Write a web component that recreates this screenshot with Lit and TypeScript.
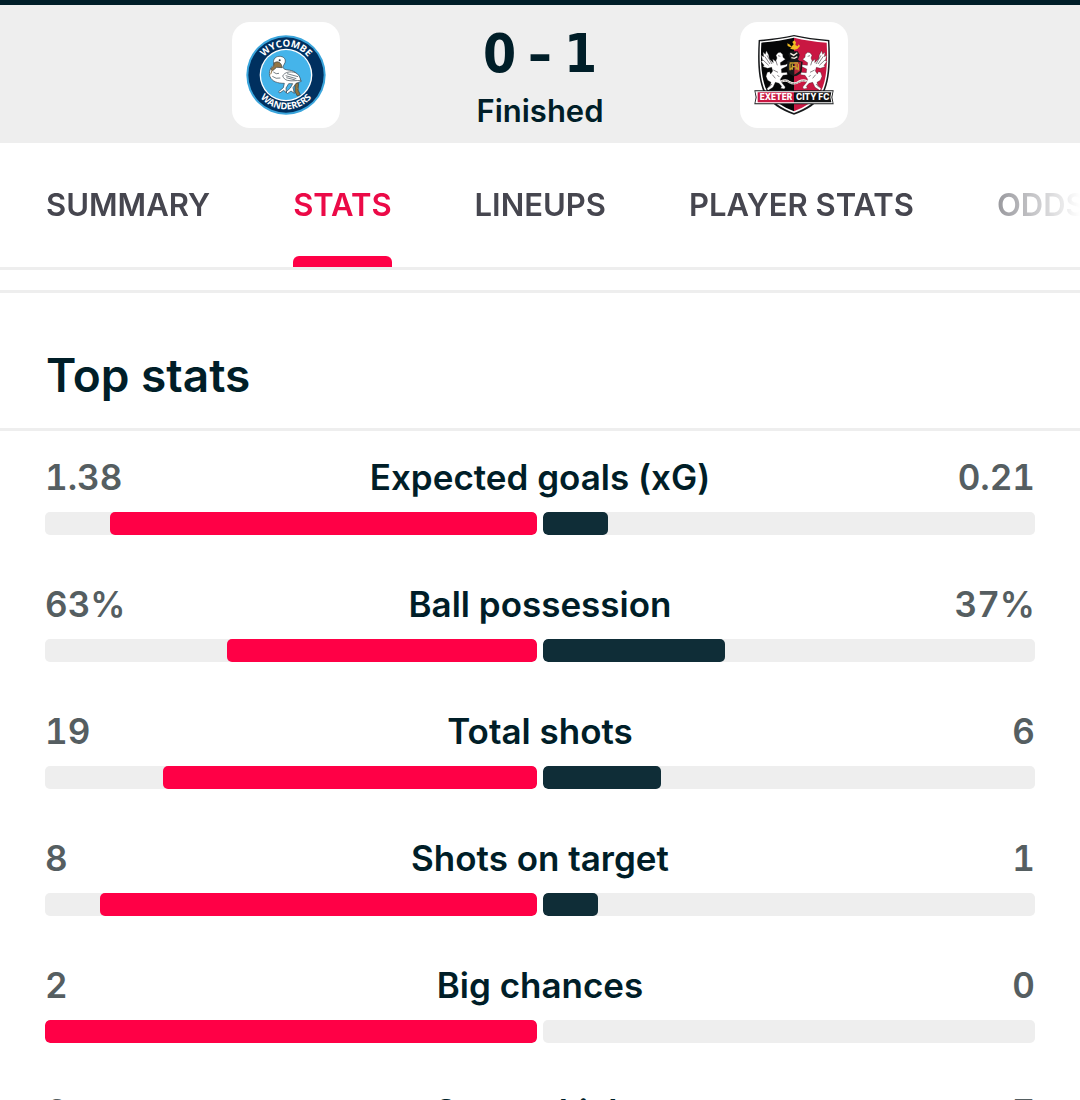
import { LitElement, html, svg, css } from "lit";
import { customElement, property } from "lit/decorators.js";

interface Stat {
  label: string;
  home: string;
  away: string;
  homeShare: number;
  awayShare: number;
}

const STATS: Stat[] = [
  { label: "Expected goals (xG)", home: "1.38", away: "0.21", homeShare: 86.8, awayShare: 13.2 },
  { label: "Ball possession", home: "63%", away: "37%", homeShare: 63, awayShare: 37 },
  { label: "Total shots", home: "19", away: "6", homeShare: 76, awayShare: 24 },
  { label: "Shots on target", home: "8", away: "1", homeShare: 88.8, awayShare: 11.2 },
  { label: "Big chances", home: "2", away: "0", homeShare: 100, awayShare: 0 },
  { label: "Corner kicks", home: "6", away: "7", homeShare: 46.2, awayShare: 53.8 },
];

const TABS = ["Summary", "Stats", "Lineups", "Player stats", "Odds"];

@customElement("wycombe-crest")
class WycombeCrest extends LitElement {
  static styles = css`
    :host { display: block; }
    svg { display: block; width: 100%; }
    text { font-family: "Open Sans", "Noto Sans", sans-serif; font-weight: 700; fill: #fff; }
  `;
  render() {
    return html`<svg viewBox="0 0 240 240" role="img" aria-label="Wycombe Wanderers">
      <defs>
        <path id="upper" d="M35 120 A85 85 0 0 1 205 120" />
        <path id="lower" d="M17 120 A103 103 0 0 0 223 120" />
      </defs>
      <circle cx="120" cy="120" r="119" fill="#3aa5dc" />
      <circle cx="120" cy="120" r="113" fill="#00305f" />
      <circle cx="120" cy="120" r="79" fill="#fff" />
      <circle cx="120" cy="120" r="75" fill="#45b4ea" />
      <text font-size="29" text-anchor="middle"><textPath href="#upper" startOffset="50%">WYCOMBE</textPath></text>
      <text font-size="28" text-anchor="middle"><textPath href="#lower" startOffset="50%">WANDERERS</textPath></text>
      ${svg`
      <g stroke="#34414a" stroke-width="2" stroke-linejoin="round">
        <path fill="#8d7440" d="M147 142 L158 145 L156 165 L163 179 L154 183 L147 170 Z" />
        <path fill="#fff" d="M115 87 C123 75 114 63 99 64 C86 65 79 76 84 89 C73 97 67 112 72 125 C78 140 96 145 115 145 L112 158 L98 170 L101 174 L113 166 L121 173 L120 159 L128 146 L140 146 L133 159 L120 171 L124 176 L135 168 L145 175 L141 158 L150 145 L166 139 L161 130 C155 114 143 106 125 105 C111 103 108 98 115 87 Z" />
        <path fill="#947545" d="M84 84 C93 78 101 80 106 89 L109 98 L92 97 L80 107 L74 102 L83 93 Z" />
        <path fill="#fff" d="M110 123 C116 111 133 108 148 113 C158 117 163 127 164 137 C151 135 140 140 124 136 C117 134 113 130 110 123 Z" />
        <path fill="none" d="M119 122 L151 131 M123 116 L156 125 M121 128 L148 135 M82 111 Q91 119 99 115 M79 124 Q90 133 103 129" />
      </g>
      <path fill="none" stroke="#947545" stroke-width="3" d="M93 91 L101 92 M79 103 L74 118 M150 157 L159 164" />
      <circle cx="101" cy="76" r="3" fill="#26343d" />`}
    </svg>`;
  }
}

@customElement("exeter-crest")
class ExeterCrest extends LitElement {
  static styles = css`
    :host { display: block; }
    svg { display: block; width: 100%; }
    text { font-family: Inter, "Liberation Sans", sans-serif; font-weight: 800; fill: #fff; }
  `;
  render() {
    const griffin = svg`
      <path fill="#fff" stroke="#222" stroke-width="1" d="M94 73 L87 67 L86 58 L79 52 L72 53 L66 61 L69 69 L65 79 L56 72 L58 83 L46 72 L44 60 L37 47 L34 58 L27 51 L29 65 L22 61 L26 77 L21 79 L30 91 L27 95 L41 100 L53 97 L56 108 L50 117 L47 110 L40 112 L36 124 L41 136 L51 142 L49 150 L38 162 L43 166 L57 157 L64 142 L75 145 L83 154 L80 160 L91 162 L94 156 L84 144 L79 133 L87 121 L100 119 L99 112 L83 113 L82 102 L99 94 L104 84 L94 89 L80 91 L79 83 Z" />
      <path fill="none" stroke="#4c454b" stroke-width="2" d="M32 64 L48 87 M39 61 L54 87 M27 75 L44 91 M66 78 L70 91 M58 105 L72 112 M55 119 L64 130 M72 62 L79 64 M70 120 L76 126 M45 157 L54 147" />`;
    return html`<svg viewBox="0 0 240 240" role="img" aria-label="Exeter City FC">
      <path fill="#17191b" d="M120 0 C90 7 55 12 14 15 C10 79 12 137 31 175 C48 205 82 227 120 239 C158 227 192 205 209 175 C228 137 230 79 226 15 C185 12 150 7 120 0 Z" />
      <path fill="#fff" d="M120 4 C91 11 56 16 18 19 C15 79 17 135 35 172 C52 200 85 222 120 234 C155 222 188 200 205 172 C223 135 225 79 222 19 C184 16 149 11 120 4 Z" />
      <path fill="#050607" d="M120 8 C91 15 57 20 22 23 C19 79 21 132 39 169 C56 196 87 217 120 229 Z" />
      <path fill="#c91742" d="M120 8 C149 15 183 20 218 23 C221 79 219 132 201 169 C184 196 153 217 120 229 Z" />
      ${griffin}
      <g transform="translate(240 0) scale(-1 1)">${griffin}</g>
      <path fill="#17191b" d="M103 57 L110 49 L131 49 L137 59 L132 74 L138 79 L146 80 L143 110 Q137 120 121 124 Q106 119 101 108 L99 79 L110 75 Z" />
      <path fill="#b5243b" d="M121 81 L141 82 L138 108 L121 119 Z" />
      <path fill="#f1bd23" d="M100 25 L108 29 L112 35 L119 28 L115 21 L121 16 L126 22 L124 30 L131 34 L134 28 L138 33 L130 42 L121 44 L108 41 L113 38 L101 33 Z" />
      <path fill="none" stroke="#f5ede1" stroke-width="4" d="M109 55 L119 61 L130 53 M112 68 L121 70 L130 65" />
      <path fill="none" stroke="#c9a32f" stroke-width="4" d="M107 84 L132 84 M108 86 L108 106 M115 88 L115 104 M126 87 L126 104 M133 86 L133 106 M107 105 L117 95 L125 95 L134 105" />
      <path fill="none" stroke="#f4efeb" stroke-width="7" d="M82 139 Q97 133 106 141 Q121 150 135 140 Q149 133 158 139" />
      <path fill="none" stroke="#28282a" stroke-width="2" stroke-dasharray="3 2" d="M84 139 Q97 134 106 142 Q121 150 135 141 Q149 134 157 140" />
      <path fill="#17191b" d="M1 166 H239 L235 187 L239 208 H1 L5 187 Z" />
      <path fill="#fff" d="M4 169 H236 L232 187 L236 205 H4 L8 187 Z" />
      <path fill="#c91742" d="M11 172 H120 V202 H11 Z" />
      <path fill="#101113" d="M120 172 H232 L229 187 L232 202 H120 Z" />
      <text x="66" y="196" font-size="25" text-anchor="middle">EXETER</text>
      <text x="176" y="196" font-size="25" text-anchor="middle">CITY FC</text>
    </svg>`;
  }
}

@customElement("stat-row")
class StatRow extends LitElement {
  @property({ attribute: false }) stat!: Stat;

  static styles = css`
    :host { display: block; }
    .values {
      display: grid;
      grid-template-columns: 1fr auto 1fr;
      align-items: center;
      line-height: 46px;
      font-size: 35px;
      font-weight: 600;
    }
    .value { color: #555e61; font-variant-numeric: tabular-nums; }
    .away { text-align: right; }
    .label { color: #001e28; }
    .bars {
      display: grid;
      grid-template-columns: 1fr 1fr;
      gap: 6px;
      margin-top: 12px;
    }
    .track {
      display: flex;
      height: 23px;
      border-radius: 5px;
      background: #eee;
      overflow: hidden;
    }
    .track-home { justify-content: flex-end; }
    .fill { border-radius: 5px; }
    .fill-home { background: #ff0046; }
    .fill-away { background: #0f2d37; }
  `;
  render() {
    const s = this.stat;
    return html`
      <div class="values">
        <span class="value">${s.home}</span>
        <span class="label">${s.label}</span>
        <span class="value away">${s.away}</span>
      </div>
      <div class="bars">
        <div class="track track-home"><div class="fill fill-home" style="width:${s.homeShare}%"></div></div>
        <div class="track"><div class="fill fill-away" style="width:${s.awayShare}%"></div></div>
      </div>
    `;
  }
}

@customElement("app-root")
class AppRoot extends LitElement {
  static styles = css`
    :host {
      display: block;
      height: 100vh;
      overflow: hidden;
      background: #fff;
      color: #001e28;
      font-family: Inter, Roboto, "Liberation Sans", sans-serif;
    }
    .match {
      display: grid;
      grid-template-columns: 1fr 400px 1fr;
      align-items: start;
      padding: 17px 0 7px;
      border-top: 5px solid #001e28;
      background: #eee;
    }
    .team {
      box-sizing: border-box;
      width: 108px;
      padding: 13px 14px;
      border-radius: 18px;
      background: #fff;
    }
    .team-home { justify-self: end; }
    .result { text-align: center; }
    .score {
      display: flex;
      justify-content: center;
      gap: 12px;
      font-family: "DejaVu Sans Condensed", "DejaVu Sans", sans-serif;
      font-size: 53px;
      font-weight: 700;
      line-height: 64px;
    }
    .status { font-size: 31px; font-weight: 600; line-height: 50px; }
    .tabs {
      display: flex;
      gap: 83px;
      height: 124px;
      padding-left: 46px;
      border-bottom: 3px solid #eee;
      overflow: hidden;
      -webkit-mask-image: linear-gradient(#000, #000), linear-gradient(#000, #000), linear-gradient(to right, #0009, #0000);
      -webkit-mask-size: calc(100% - 90px) 100%, 100% 3px, 90px 100%;
      -webkit-mask-position: left top, left bottom, right top;
      -webkit-mask-repeat: no-repeat;
    }
    .tab {
      display: flex;
      flex: none;
      flex-direction: column;
      color: #46464f;
      font-size: 31px;
      font-weight: 600;
      line-height: 124px;
      text-transform: uppercase;
      text-decoration: none;
      white-space: nowrap;
    }
    .tab.active { color: #eb0a47; }
    .tab.active::after {
      content: "";
      height: 11px;
      flex: none;
      margin-top: -11px;
      border-radius: 6px 6px 0 0;
      background: #ff0046;
    }
    .section { margin-top: 20px; border-top: 3px solid #eee; }
    .heading {
      margin: 0;
      padding: 53px 46px 24px;
      border-bottom: 3px solid #eee;
      font-size: 46px;
      font-weight: 600;
      line-height: 58px;
    }
    .stats {
      display: grid;
      gap: 46px;
      padding: 23px 45px;
    }
  `;
  render() {
    return html`
      <header class="match">
        <wycombe-crest class="team team-home"></wycombe-crest>
        <div class="result">
          <div class="score"><span>0</span><span>–</span><span>1</span></div>
          <div class="status">Finished</div>
        </div>
        <exeter-crest class="team"></exeter-crest>
      </header>
      <nav class="tabs">
        ${TABS.map((t) => html`<a class="tab ${t === "Stats" ? "active" : ""}" href="#">${t}</a>`)}
      </nav>
      <section class="section">
        <h2 class="heading">Top stats</h2>
        <div class="stats">${STATS.map((s) => html`<stat-row .stat=${s}></stat-row>`)}</div>
      </section>
    `;
  }
}
